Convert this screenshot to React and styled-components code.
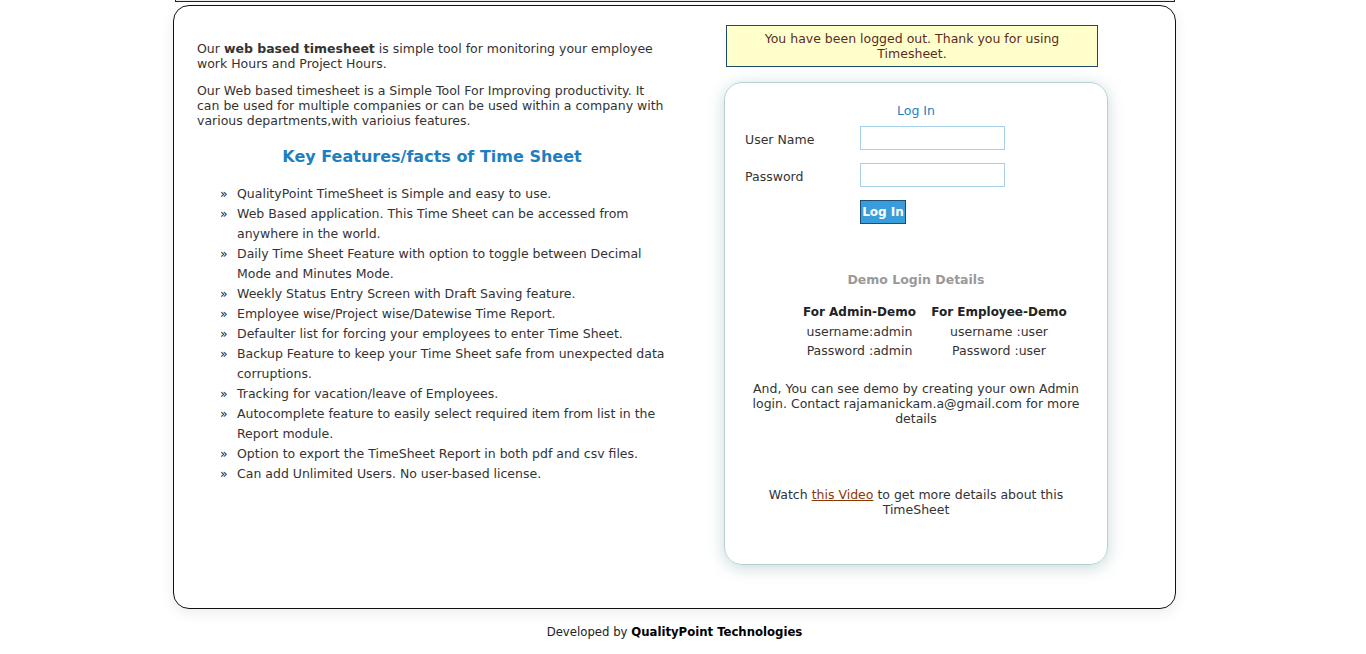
import React from "react";
import styled, { createGlobalStyle } from "styled-components";

const Global = createGlobalStyle`
  html, body { margin: 0; padding: 0; background: #fff; }
  body {
    font-family: Verdana, "DejaVu Sans", sans-serif;
    font-size: 12.5px;
    color: #333;
  }
`;

const Page = styled.div`
  padding-right: 17px;
`;

const TopBar = styled.div`
  width: 998px;
  height: 1px;
  margin: 0 auto;
  background: #eee;
  border: 1px solid #222;
  border-top: none;
`;

const Main = styled.div`
  width: 955px;
  margin: 3px auto 0;
  padding: 19px 23px 43px;
  border: 1px solid #111;
  border-radius: 16px;
  box-shadow: 0 4px 14px rgba(0, 0, 0, 0.08);
  display: flex;
  gap: 57px;
  align-items: flex-start;
`;

const Left = styled.div`
  width: 470px;
  padding-top: 16px;
`;

const Para = styled.p`
  margin: 0 0 12px;
  line-height: 15px;
`;

const Heading = styled.h2`
  margin: 18px 0 16px;
  font-size: 16px;
  line-height: 22px;
  font-weight: bold;
  color: #1e7fc0;
  text-align: center;
`;

const List = styled.ul`
  list-style: none;
  margin: 0;
  padding: 0 0 0 40px;
`;

const Item = styled.li`
  position: relative;
  line-height: 20px;
  &::before {
    content: "»";
    position: absolute;
    left: -17px;
    top: 0;
    color: #222;
  }
`;

const Right = styled.div`
  width: 384px;
  display: flex;
  flex-direction: column;
`;

const Notice = styled.div`
  width: 360px;
  margin-left: 2px;
  padding: 5px 5px;
  background: #ffffcc;
  border: 1px solid #1d4a66;
  color: #5a2d1e;
  text-align: center;
  line-height: 15px;
`;

const LoginBox = styled.div`
  margin-top: 15px;
  border: 1px solid #b3d2d3;
  border-radius: 18px;
  box-shadow: 0 3px 16px rgba(70, 120, 125, 0.28);
  padding: 20px 20px 47px;
  display: flex;
  flex-direction: column;
`;

const BoxTitle = styled.div`
  text-align: center;
  color: #1a82c4;
  line-height: 15px;
  margin-bottom: 8px;
`;

const FormRow = styled.div`
  display: grid;
  grid-template-columns: 115px 145px;
  align-items: center;
  height: 24px;
  margin-bottom: 13px;
`;

const Label = styled.label`
  line-height: 15px;
  padding-top: 2px;
`;

const Input = styled.input`
  box-sizing: border-box;
  width: 145px;
  height: 24px;
  border: 1px solid #a6cfe8;
  padding: 2px 4px;
  font: inherit;
  outline: none;
`;

const Button = styled.button`
  box-sizing: border-box;
  height: 24px;
  width: 46px;
  padding: 0;
  background: #3a9ddb;
  border: 1px solid #1d4f6e;
  color: #fff;
  font-family: Verdana, "DejaVu Sans", sans-serif;
  font-size: 12px;
  font-weight: bold;
  white-space: nowrap;
  cursor: pointer;
`;

const DemoTitle = styled.div`
  margin-top: 34px;
  text-align: center;
  color: #999;
  font-weight: bold;
  font-size: 12.5px;
  line-height: 17px;
`;

const DemoGrid = styled.div`
  margin: 15px 0 0 55px;
  display: grid;
  grid-template-columns: 119px 160px;
  text-align: center;
  line-height: 19px;
  white-space: nowrap;
`;

const Cell = styled.div`
  font-weight: ${(p) => (p.$head ? "bold" : "normal")};
  font-size: ${(p) => (p.$head ? "12px" : "12.5px")};
  color: ${(p) => (p.$head ? "#222" : "#333")};
`;

const CenterText = styled.p`
  margin: ${(p) => p.$mt}px 0 0;
  text-align: center;
  line-height: 15px;
`;

const VideoLink = styled.a`
  color: #8a3800;
  text-decoration: underline;
`;

const Footer = styled.div`
  margin-top: 15px;
  text-align: center;
  font-family: "DejaVu Sans Condensed", Tahoma, "DejaVu Sans", sans-serif;
  font-size: 13px;
  line-height: 15px;
  color: #222;
  b { color: #000; }
`;

const features = [
  "QualityPoint TimeSheet is Simple and easy to use.",
  "Web Based application. This Time Sheet can be accessed from anywhere in the world.",
  "Daily Time Sheet Feature with option to toggle between Decimal Mode and Minutes Mode.",
  "Weekly Status Entry Screen with Draft Saving feature.",
  "Employee wise/Project wise/Datewise Time Report.",
  "Defaulter list for forcing your employees to enter Time Sheet.",
  "Backup Feature to keep your Time Sheet safe from unexpected data corruptions.",
  "Tracking for vacation/leave of Employees.",
  "Autocomplete feature to easily select required item from list in the Report module.",
  "Option to export the TimeSheet Report in both pdf and csv files.",
  "Can add Unlimited Users. No user-based license.",
];

export default function App() {
  return (
    <Page>
      <Global />
      <TopBar />
      <Main>
        <Left>
          <Para>
            Our <b>web based timesheet</b> is simple tool for monitoring your employee work Hours and Project Hours.
          </Para>
          <Para>
            Our Web based timesheet is a Simple Tool For Improving productivity. It can be used for multiple companies or can be used within a company with various departments,with varioius features.
          </Para>
          <Heading>Key Features/facts of Time Sheet</Heading>
          <List>
            {features.map((f) => (
              <Item key={f}>{f}</Item>
            ))}
          </List>
        </Left>
        <Right>
          <Notice>You have been logged out. Thank you for using Timesheet.</Notice>
          <LoginBox>
            <BoxTitle>Log In</BoxTitle>
            <FormRow>
              <Label>User Name</Label>
              <Input type="text" />
            </FormRow>
            <FormRow>
              <Label>Password</Label>
              <Input type="password" />
            </FormRow>
            <FormRow>
              <span />
              <div>
                <Button>Log In</Button>
              </div>
            </FormRow>
            <DemoTitle>Demo Login Details</DemoTitle>
            <DemoGrid>
              <Cell $head>For Admin-Demo</Cell>
              <Cell $head>For Employee-Demo</Cell>
              <Cell>username:admin</Cell>
              <Cell>username :user</Cell>
              <Cell>Password :admin</Cell>
              <Cell>Password :user</Cell>
            </DemoGrid>
            <CenterText $mt={21}>
              And, You can see demo by creating your own Admin login. Contact rajamanickam.a@gmail.com for more details
            </CenterText>
            <CenterText $mt={61}>
              Watch <VideoLink href="#">this Video</VideoLink> to get more details about this TimeSheet
            </CenterText>
          </LoginBox>
        </Right>
      </Main>
      <Footer>
        Developed by <b>QualityPoint Technologies</b>
      </Footer>
    </Page>
  );
}
